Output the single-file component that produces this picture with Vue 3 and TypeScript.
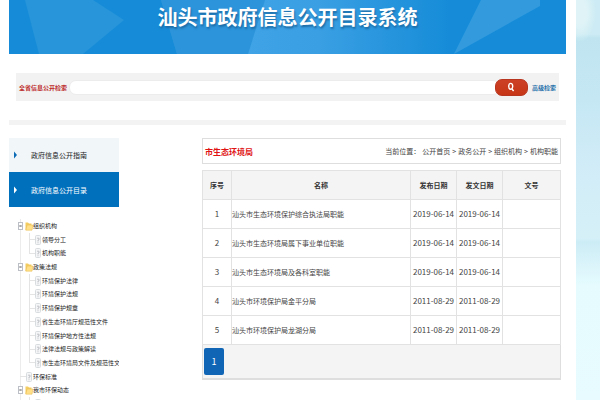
<script setup lang="ts">
import { ref } from 'vue'

interface TreeRow {
  text: string
  level: number
  folder?: boolean
  last?: boolean
}
interface Doc {
  id: number
  name: string
  published: string
  issued: string
  code: string
}

const keyword = ref('')
const menu = [
  { text: '政府信息公开指南', active: false },
  { text: '政府信息公开目录', active: true },
]
const tree: TreeRow[] = [
  { text: '组织机构', level: 0, folder: true },
  { text: '领导分工', level: 1 },
  { text: '机构职能', level: 1, last: true },
  { text: '政策法规', level: 0, folder: true },
  { text: '环境保护法律', level: 1 },
  { text: '环境保护法规', level: 1 },
  { text: '环境保护规章', level: 1 },
  { text: '省生态环境厅规范性文件', level: 1 },
  { text: '环境保护地方性法规', level: 1 },
  { text: '法律法规与政策解读', level: 1 },
  { text: '市生态环境局文件及规范性文件', level: 1, last: true },
  { text: '环保标准', level: 0 },
  { text: '我市环保动态', level: 0, folder: true },
  { text: '文件通知', level: 1 },
]
const docs: Doc[] = [
  { id: 1, name: '汕头市生态环境保护综合执法局职能', published: '2019-06-14', issued: '2019-06-14', code: '' },
  { id: 2, name: '汕头市生态环境局属下事业单位职能', published: '2019-06-14', issued: '2019-06-14', code: '' },
  { id: 3, name: '汕头市生态环境局及各科室职能', published: '2019-06-14', issued: '2019-06-14', code: '' },
  { id: 4, name: '汕头市环境保护局金平分局', published: '2011-08-29', issued: '2011-08-29', code: '' },
  { id: 5, name: '汕头市环境保护局龙湖分局', published: '2011-08-29', issued: '2011-08-29', code: '' },
]
const crumbs = ['公开首页', '政务公开', '组织机构', '机构职能']
</script>

<template>
  <div class="page">
    <div class="sheet">
      <header class="banner">
        <svg class="facets" viewBox="0 0 557 54" preserveAspectRatio="none" aria-hidden="true">
          <defs>
            <linearGradient id="glow" x1="0" x2="1" y1="0" y2="0">
              <stop offset="0" stop-color="#2b92d8" />
              <stop offset="0.3" stop-color="#3fa3e6" />
              <stop offset="0.55" stop-color="#3a9fe3" />
              <stop offset="1" stop-color="#168cd8" />
            </linearGradient>
          </defs>
          <rect width="557" height="54" fill="#168cd8" />
          <path d="M16 0H84L115 20L74 54H30Z" fill="#2895da" />
          <path d="M152 0H440V54H168Z" fill="url(#glow)" />
          <path d="M152 0H256L239 54H168Z" fill="#2c94da" />
          <path d="M472 0H531V6L445 54Z" fill="#339ade" />
        </svg>
        <h1>汕头市政府信息公开目录系统</h1>
      </header>

      <form class="search" @submit.prevent>
        <label for="kw">全省信息公开检索</label>
        <div class="field">
          <input id="kw" v-model="keyword" type="text" />
          <button type="submit" aria-label="检索">
            <svg viewBox="0 0 8 10" aria-hidden="true">
              <ellipse cx="3.7" cy="4.3" rx="2" ry="2.9" fill="none" stroke="#fff" stroke-width="1.4" />
              <path d="M4.8 6.7L6.6 9" stroke="#fff" stroke-width="1.4" />
            </svg>
          </button>
        </div>
        <a href="#">高级检索</a>
      </form>

      <div class="rule"></div>

      <div class="columns">
        <aside>
          <nav class="menu">
            <a v-for="m in menu" :key="m.text" href="#" :class="{ active: m.active }">
              <svg viewBox="0 0 3 8" aria-hidden="true"><path d="M0 0.500L3 4L0 7.500Z" fill="currentColor" /></svg>
              <span>{{ m.text }}</span>
            </a>
          </nav>
          <ul class="tree">
            <li v-for="(r, i) in tree" :key="i" :class="{ child: r.level === 1, last: r.last }">
              <svg v-if="r.folder" class="toggle" viewBox="0 0 5 8" aria-hidden="true">
                <rect x="0.500" y="0.500" width="4" height="7" fill="#fff" stroke="#bcc0c6" />
                <path d="M1.300 4H3.700" stroke="#555" />
              </svg>
              <span v-else class="branch"></span>
              <svg v-if="r.folder" class="folder" viewBox="0 0 8 10" aria-hidden="true">
                <path d="M0.500 1.500H3L4 2.500H6.500V9H0.500Z" fill="#f3cd62" />
                <path d="M0.800 9.200L2 4H8L7 9.200Z" fill="#ffdf87" stroke="#e7b94c" stroke-width="0.500" />
              </svg>
              <svg v-else class="leaf" viewBox="0 0 6 10" aria-hidden="true">
                <rect x="0.500" y="0.500" width="5" height="9" rx="1" fill="#f5f6f7" stroke="#d9dcdf" />
                <path d="M2 3.200H4V5H3V6.500M3 7.300V8.200" fill="none" stroke="#b4b8bd" stroke-width="0.800" />
              </svg>
              <a href="#">{{ r.text }}</a>
            </li>
          </ul>
        </aside>

        <main>
          <div class="heading">
            <h2>市生态环境局</h2>
            <div class="crumbs">
              <span>当前位置：</span>
              <template v-for="(c, i) in crumbs" :key="c">
                <span v-if="i > 0">&gt;</span>
                <a href="#">{{ c }}</a>
              </template>
            </div>
          </div>

          <table>
            <colgroup>
              <col class="c-id" />
              <col />
              <col class="c-date" />
              <col class="c-date" />
              <col class="c-code" />
            </colgroup>
            <thead>
              <tr>
                <th>序号</th>
                <th>名称</th>
                <th>发布日期</th>
                <th>发文日期</th>
                <th>文号</th>
              </tr>
            </thead>
            <tbody>
              <tr v-for="d in docs" :key="d.id">
                <td class="num">{{ d.id }}</td>
                <td class="name"><a href="#">{{ d.name }}</a></td>
                <td class="num">{{ d.published }}</td>
                <td class="num">{{ d.issued }}</td>
                <td>{{ d.code }}</td>
              </tr>
            </tbody>
          </table>
          <div class="pager"><button type="button">1</button></div>
        </main>
      </div>
    </div>
    <div class="sky"></div>
  </div>
</template>

<style>
body {
  margin: 0;
  background: #fff;
}
</style>

<style scoped>
* {
  box-sizing: border-box;
}
.page {
  display: flex;
  height: 100vh;
  overflow: hidden;
  font-family: "Noto Sans CJK SC", sans-serif;
  font-size: 7px;
  color: #444;
}
a {
  color: inherit;
  text-decoration: none;
}
.sheet {
  flex: 1;
  min-width: 0;
  padding: 0 10px 0 9px;
}
.sky {
  width: 24px;
  background:
    radial-gradient(ellipse 16px 30px at 4px 12px, #e0f4f7 40%, transparent),
    linear-gradient(#cdebf4 0, #cdebf4 34px, #c0e5f0 38px, #c5e7f4 100px, #d3edf8 180px, #d6f0f8 238px, #ccecf5 242px, #d9f3fa 262px, #e5fbfe 285px, #e8fcff 400px);
}
.banner {
  position: relative;
  height: 54px;
  overflow: hidden;
  padding-top: 2px;
}
.facets {
  position: absolute;
  inset: 0;
  width: 100%;
  height: 100%;
}
h1 {
  position: relative;
  margin: 0;
  font-size: 20px;
  line-height: 30px;
  text-align: center;
  font-weight: 700;
  color: #fff;
  text-shadow: 1px 2px 2px #1c6ca6;
}
.search {
  display: flex;
  align-items: center;
  height: 28px;
  margin: 19px 7px 0;
  padding: 0 3px;
  background: #f2f2f2;
  font-size: 6px;
}
.search label {
  width: 50px;
  font-weight: 700;
  color: #bd2b2b;
}
.field {
  flex: 1;
  display: flex;
  align-items: center;
  min-width: 0;
}
.field input {
  flex: 1;
  min-width: 0;
  height: 15px;
  margin-right: -5px;
  padding: 0 8px;
  border: 1px solid #ececec;
  border-radius: 7px;
  background: #fff;
  font: inherit;
  outline: none;
}
.field button {
  display: flex;
  align-items: center;
  justify-content: center;
  width: 33px;
  height: 17px;
  padding: 0;
  border: 1px solid #b8351f;
  border-radius: 7px;
  background: linear-gradient(#cd4026, #c63616);
  z-index: 1;
}
.field button svg {
  width: 8px;
  height: 10px;
}
.search > a {
  margin-left: 4px;
  color: #2670aa;
  font-weight: 700;
}
.rule {
  height: 5px;
  margin-top: 19px;
  background: #f3f3f3;
}
.columns {
  display: flex;
  align-items: flex-start;
  gap: 83px;
  padding: 13px 5px 0 0;
}
aside {
  width: 110px;
  flex: none;
}
.menu a {
  display: flex;
  align-items: center;
  gap: 14px;
  height: 34px;
  padding-left: 5px;
  background: #f1f6f9;
  color: #222;
}
.menu a svg {
  width: 3px;
  height: 8px;
  color: #0b6cb5;
}
.menu a.active {
  height: 35px;
  background: #0070bd;
  color: #fff;
}
.menu a.active svg {
  color: #fff;
}
.tree {
  display: grid;
  grid-auto-rows: 1fr;
  height: 192px;
  margin: 12px 0 0;
  padding: 0 0 0 9px;
  list-style: none;
  font-size: 6px;
  line-height: 12px;
  overflow: hidden;
  color: #222;
}
.tree li {
  display: flex;
  align-items: center;
  min-width: 0;
  white-space: nowrap;
  background: linear-gradient(#ececec, #ececec) 2px 0 / 1px 100% no-repeat;
}
.tree li.child {
  padding-left: 9px;
  background:
    linear-gradient(#ececec, #ececec) 2px 0 / 1px 100% no-repeat,
    linear-gradient(#e4e4e4, #e4e4e4) 11px 0 / 1px 100% no-repeat;
}
.tree li.last {
  background:
    linear-gradient(#ececec, #ececec) 2px 0 / 1px 100% no-repeat,
    linear-gradient(#e4e4e4, #e4e4e4) 11px 0 / 1px 50% no-repeat;
}
.toggle {
  flex: none;
  width: 5px;
  height: 8px;
  margin-right: 2px;
}
.branch {
  flex: none;
  width: 6px;
  height: 1px;
  margin: 0 0 0 2px;
  background: #e4e4e4;
}
.folder {
  flex: none;
  width: 8px;
  height: 10px;
}
.leaf {
  flex: none;
  width: 6px;
  height: 10px;
  margin: 0 1px 0 0;
}
main {
  flex: 1;
  min-width: 0;
}
.heading {
  display: flex;
  align-items: center;
  justify-content: space-between;
  height: 26px;
  padding: 0 2px;
  border: 1px solid #dedede;
}
h2 {
  margin: 0;
  font-size: 8px;
  font-weight: 700;
  color: #e01212;
}
.crumbs {
  display: flex;
  gap: 2px;
  white-space: nowrap;
}
table {
  width: 100%;
  margin-top: 6px;
  table-layout: fixed;
  border-collapse: collapse;
}
.c-id {
  width: 29px;
}
.c-date {
  width: 46px;
}
.c-code {
  width: 58px;
}
th,
td {
  height: 29px;
  padding: 0;
  border: 1px solid #e2e2e2;
  line-height: 12px;
  text-align: center;
  white-space: nowrap;
}
th {
  background: #f4f4f4;
  font-weight: 700;
  color: #333;
}
.name {
  text-align: left;
}
.num {
  font-size: 8px;
}
.pager {
  height: 35px;
  padding: 3px 1px;
  border: 1px solid #dedede;
  border-top: 0;
  border-bottom-width: 2px;
  background: #f4f4f4;
}
.pager button {
  display: block;
  width: 20px;
  height: 27px;
  padding: 0;
  border: 0;
  border-radius: 2px;
  background: #1065b5;
  color: #fff;
  font-family: inherit;
  font-size: 9px;
}
</style>
